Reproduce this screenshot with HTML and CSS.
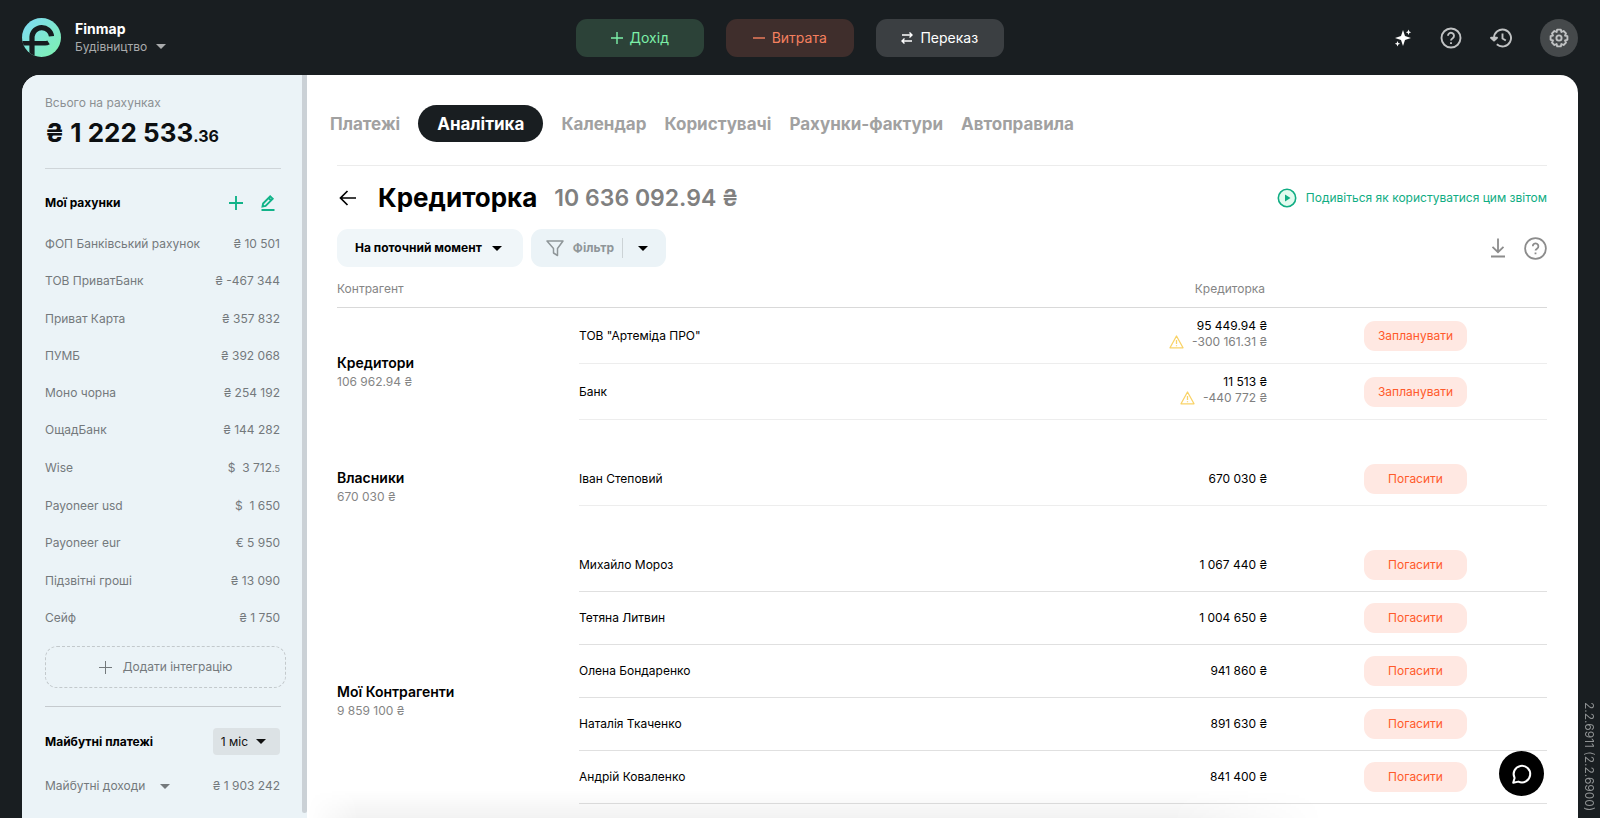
FILE: index.html
```html
<!DOCTYPE html>
<html lang="uk">
<head>
<meta charset="utf-8">
<title>Finmap</title>
<link rel="stylesheet" href="styles.css">
</head>
<body>
<header class="topbar">
  <div class="brand">
    <svg class="logo" viewBox="0 0 39 39" aria-hidden="true">
      <defs>
        <linearGradient id="lg" x1="0" y1="0" x2="1" y2="1"><stop offset="0.1" stop-color="#7fdcf0"/><stop offset="0.9" stop-color="#7df0b4"/></linearGradient>
        <clipPath id="disc"><circle cx="19.500" cy="19.500" r="19.500"/></clipPath>
      </defs>
      <circle cx="19.500" cy="19.500" r="19.500" fill="url(#lg)"/>
      <g clip-path="url(#disc)" fill="none" stroke="#171c1f" stroke-width="5.200">
        <path d="M10 39V18.600a9.800 9.800 0 0 1 19.500-.4"/>
        <path d="M-1 25.300H23a6 6 0 0 0 3.500-1" stroke-width="4.600"/>
      </g>
    </svg>
    <div class="brand-text">
      <strong class="brand-name">Finmap</strong>
      <button class="company" type="button">Будівництво <span class="caret"></span></button>
    </div>
  </div>
  <div class="quick">
    <button class="quick-btn income" type="button"><svg width="12" height="12" viewBox="0 0 12 12"><path d="M6 0v12M0 6h12"/></svg>Дохід</button>
    <button class="quick-btn expense" type="button"><svg width="12" height="12" viewBox="0 0 12 12"><path d="M0 6h12"/></svg>Витрата</button>
    <button class="quick-btn transfer" type="button"><svg width="12" height="12" viewBox="0 0 12 12"><path d="M1 3h10M8.500.5 11 3 8.500 5.500M11 9H1M3.500 6.500 1 9l2.500 2.500"/></svg>Переказ</button>
  </div>
  <div class="tools">
    <button class="tool sparkle" type="button" aria-label="AI"><svg width="18" height="18" viewBox="0 0 18 18"><path d="M9 1 11 7 17 9 11 11 9 17 7 11 1 9 7 7Z"/><path d="M14.500 0.500l.8 1.900 1.900.8-1.900.8-.8 1.900-.8-1.900-1.900-.8 1.900-.8ZM3.500 12l.8 1.900 1.900.8-1.900.8-.8 1.900-.8-1.900-1.900-.8 1.900-.8Z"/></svg></button>
    <button class="tool" type="button" aria-label="Допомога"><svg width="22" height="22" viewBox="0 0 22 22" class="line"><circle cx="11" cy="11" r="9.500"/><path d="M8 8.800a3 3 0 1 1 4.700 2.400c-1 .7-1.700 1.200-1.700 2.300"/><path d="M11 15.200v1.800"/></svg></button>
    <button class="tool" type="button" aria-label="Історія"><svg width="22" height="22" viewBox="0 0 22 22" class="line"><path d="M4 11a8.500 8.500 0 1 1 2.800 6.300M12.500 6.500V11.500l3.300 2"/><path d="M1 10.800h6L4 13.600Z" fill="currentColor"/></svg></button>
    <button class="tool settings" type="button" aria-label="Налаштування"><svg width="20" height="20" viewBox="0 0 20 20" class="line"><path d="M18.400 8.200V11.800L16 12.400 17 14.600 14.600 17 12.400 16 11.800 18.400H8.200L7.600 16 5.400 17 3 14.600 4 12.400 1.600 11.800V8.200L4 7.600 3 5.400 5.400 3 7.600 4 8.200 1.600H11.800L12.400 4 14.600 3 17 5.400 16 7.600Z"/><circle cx="10" cy="10" r="2.600"/></svg></button>
  </div>
</header>

<div class="shell">
  <aside class="sidebar">
    <div class="total">
      <p class="total-label">Всього на рахунках</p>
      <p class="total-sum">₴ 1 222 533<small>.36</small></p>
    </div>
    <div class="side-head">
      <h2>Мої рахунки</h2>
      <button class="icon-btn" type="button" aria-label="Додати рахунок"><svg width="14" height="14" viewBox="0 0 14 14"><path d="M7 0v14M0 7h14"/></svg></button>
      <button class="icon-btn" type="button" aria-label="Редагувати"><svg width="14" height="16" viewBox="0 0 14 16"><path d="M.5 15h13M1.500 11.500l.6-3L9.200 1.400l2.500 2.400-7.100 7.100-3.100.6ZM7.600 3l2.500 2.500"/></svg></button>
    </div>
    <ul class="accounts">
      <li><span>ФОП Банківський рахунок</span><span>₴ 10 501</span></li>
      <li><span>ТОВ ПриватБанк</span><span>₴ -467 344</span></li>
      <li><span>Приват Карта</span><span>₴ 357 832</span></li>
      <li><span>ПУМБ</span><span>₴ 392 068</span></li>
      <li><span>Моно чорна</span><span>₴ 254 192</span></li>
      <li><span>ОщадБанк</span><span>₴ 144 282</span></li>
      <li><span>Wise</span><span>$ &nbsp;3 712<small>.5</small></span></li>
      <li><span>Payoneer usd</span><span>$ &nbsp;1 650</span></li>
      <li><span>Payoneer eur</span><span>€ 5 950</span></li>
      <li><span>Підзвітні гроші</span><span>₴ 13 090</span></li>
      <li><span>Сейф</span><span>₴ 1 750</span></li>
    </ul>
    <button class="integration" type="button"><svg width="13" height="13" viewBox="0 0 13 13"><path d="M6.500 0v13M0 6.500h13"/></svg>Додати інтеграцію</button>
    <div class="future">
      <div class="future-head">
        <h2>Майбутні платежі</h2>
        <button class="period" type="button">1 міс <span class="caret"></span></button>
      </div>
      <div class="future-row">
        <button class="future-toggle" type="button">Майбутні доходи <span class="caret"></span></button>
        <span>₴ 1 903 242</span>
      </div>
    </div>
    <span class="scroll-thumb"></span>
  </aside>

  <main class="main">
    <nav class="tabs">
      <a href="#payments">Платежі</a>
      <a href="#analytics" class="active">Аналітика</a>
      <a href="#calendar">Календар</a>
      <a href="#users">Користувачі</a>
      <a href="#invoices">Рахунки-фактури</a>
      <a href="#rules">Автоправила</a>
    </nav>
    <section class="report">
      <div class="title-row">
        <button class="back" type="button" aria-label="Назад"><svg width="18" height="16" viewBox="0 0 18 16"><path d="M17 8H1.500M8.500 1 1.500 8l7 7"/></svg></button>
        <h1>Кредиторка</h1>
        <span class="sum">10 636 092.94 ₴</span>
        <a class="howto" href="#howto"><svg width="20" height="20" viewBox="0 0 20 20"><circle class="ring" cx="10" cy="10" r="8.700"/><path class="play" d="M8 6.500v7l5.500-3.500Z"/></svg>Подивіться як користуватися цим звітом</a>
      </div>
      <div class="filters">
        <button class="chip moment" type="button">На поточний момент <span class="caret"></span></button>
        <button class="chip filter" type="button"><svg width="18" height="17" viewBox="0 0 18 17"><path d="M1 1h16l-5.500 7.500v7l-4-2.500V8.500Z"/></svg>Фільтр<span class="bar"></span><span class="caret"></span></button>
        <button class="plain download" type="button" aria-label="Завантажити"><svg width="16" height="20" viewBox="0 0 16 20"><path d="M8 .5v13.500M2.500 8.800 8 14.200l5.500-5.400M1 18.500h14"/></svg></button>
        <button class="plain" type="button" aria-label="Довідка"><svg width="23" height="23" viewBox="0 0 23 23"><circle cx="11.500" cy="11.500" r="10.400"/><path d="M8.800 9.300a2.800 2.800 0 1 1 4.300 2.300c-1 .7-1.600 1.100-1.600 2"/><path d="M11.500 15.400v1.800"/></svg></button>
      </div>
      <table class="grid">
        <colgroup><col class="c-group"><col class="c-name"><col class="c-sum"><col class="c-act"></colgroup>
        <thead><tr><th colspan="2" scope="col">Контрагент</th><th class="num" scope="col">Кредиторка</th><th></th></tr></thead>
        <tbody class="tall">
          <tr><th class="group" rowspan="2" scope="rowgroup">Кредитори<small>106 962.94 ₴</small></th><td>ТОВ "Артеміда ПРО"</td><td class="num">95 449.94 ₴<span class="overdue"><svg width="15" height="14" viewBox="0 0 15 14"><path d="M7.500 1 14 12.800H1ZM7.500 5v4M7.500 10.300v1"/></svg>-300 161.31 ₴</span></td><td class="act"><button type="button">Запланувати</button></td></tr>
          <tr><td>Банк</td><td class="num">11 513 ₴<span class="overdue"><svg width="15" height="14" viewBox="0 0 15 14"><path d="M7.500 1 14 12.800H1ZM7.500 5v4M7.500 10.300v1"/></svg>-440 772 ₴</span></td><td class="act"><button type="button">Запланувати</button></td></tr>
          <tr class="space"><td colspan="4"></td></tr>
        </tbody>
        <tbody>
          <tr><th class="group" scope="rowgroup">Власники<small>670 030 ₴</small></th><td>Іван Степовий</td><td class="num">670 030 ₴</td><td class="act"><button type="button">Погасити</button></td></tr>
          <tr class="space"><td colspan="4"></td></tr>
        </tbody>
        <tbody class="people">
          <tr><th class="group" rowspan="6" scope="rowgroup">Мої Контрагенти<small>9 859 100 ₴</small></th><td>Михайло Мороз</td><td class="num">1 067 440 ₴</td><td class="act"><button type="button">Погасити</button></td></tr>
          <tr><td>Тетяна Литвин</td><td class="num">1 004 650 ₴</td><td class="act"><button type="button">Погасити</button></td></tr>
          <tr><td>Олена Бондаренко</td><td class="num">941 860 ₴</td><td class="act"><button type="button">Погасити</button></td></tr>
          <tr><td>Наталія Ткаченко</td><td class="num">891 630 ₴</td><td class="act"><button type="button">Погасити</button></td></tr>
          <tr><td>Андрій Коваленко</td><td class="num">841 400 ₴</td><td class="act"><button type="button">Погасити</button></td></tr>
          <tr class="tail"><td colspan="3"></td></tr>
        </tbody>
      </table>
    </section>
  </main>
</div>
<button class="chat" type="button" aria-label="Чат"><svg width="22" height="22" viewBox="0 0 22 22"><path d="M2.200 19.800 3.600 15A8.300 8.300 0 1 1 7.400 18.600Z"/></svg></button>
<span class="version">2.2.6911 (2.2.6900)</span>
</body>
</html>
```

FILE: styles.css
```css
* { box-sizing: border-box; }
body {
  margin: 0;
  height: 100vh;
  overflow: hidden;
  display: flex;
  flex-direction: column;
  background: #191e21;
  color: #000;
  font: 12px/20px Inter, "Liberation Sans", sans-serif;
}
button { font: inherit; color: inherit; background: none; border: 0; padding: 0; cursor: pointer; }
a { text-decoration: none; }
h1, h2, p, ul { margin: 0; padding: 0; }
svg { display: block; flex: none; fill: none; }
.caret {
  display: inline-block;
  border: 5px solid transparent;
  border-top-color: currentColor;
  border-bottom: 0;
}

.topbar {
  flex: none;
  display: grid;
  grid-template-columns: 27fr auto 28fr;
  align-items: center;
  height: 75px;
  padding: 0 22px;
}
.brand { display: flex; align-items: center; gap: 14px; }
.logo { width: 39px; height: 39px; }
.brand-text { display: flex; flex-direction: column; align-items: flex-start; }
.brand-name { color: #fff; font-size: 14px; line-height: 18px; }
.company { display: flex; align-items: center; gap: 9px; color: #a9abac; line-height: 18px; }
.quick { display: flex; gap: 22px; }
.quick-btn {
  display: flex; align-items: center; justify-content: center; gap: 7px;
  width: 128px; height: 38px; border-radius: 11px;
  font-size: 14px;
}
.quick-btn svg { stroke: currentColor; stroke-width: 1.400; }
.income { background: #2c4238; color: #7cf0a8; }
.expense { background: #3f2e2c; color: #f5805f; }
.transfer { background: #3b3f42; color: #fff; }
.tools { display: flex; justify-content: flex-end; align-items: center; gap: 28px; }
.tool { color: #c0c2c3; }
.sparkle svg { fill: #fff; }
.line { stroke: currentColor; stroke-width: 1.900; stroke-linejoin: round; }
.settings {
  display: grid; place-items: center;
  width: 38px; height: 38px; border-radius: 50%; background: #45494b;
}

.shell {
  flex: 1; min-height: 0;
  display: flex;
  margin: 0 22px;
  border-radius: 18px 18px 0 0;
  overflow: hidden;
  background: #fff;
}
.sidebar {
  position: relative;
  flex: none;
  display: flex; flex-direction: column;
  width: 285px;
  padding: 18px 26px 22px 23px;
  background: #ebf3f7;
  color: #74797c;
}
.scroll-thumb {
  position: absolute; top: 0; right: 0; bottom: 5px;
  width: 5px; border-radius: 0 0 3px 3px;
  background: #cbd1d6;
}
.total { padding-bottom: 17px; border-bottom: 1px solid #cfd5d9; }
.total-label { margin-bottom: 2px; font-size: 12px; color: #8b9093; }
.total-sum { color: #0c0f11; font-size: 26px; font-weight: 700; line-height: 36px; }
.total-sum small { font-size: 16px; line-height: 1; }
h2 { font-size: 12px; line-height: 20px; font-weight: 700; color: #000; }
.side-head { display: flex; align-items: center; gap: 18px; padding: 24px 6px 21px 0; }
.side-head h2 { flex: 1; }
.icon-btn svg { stroke: #12b389; stroke-width: 1.900; }
.accounts {
  flex: 1; min-height: 0;
  display: flex; flex-direction: column; justify-content: space-between;
  list-style: none;
}
.accounts li, .future-row, .future-head {
  display: flex; justify-content: space-between; align-items: center;
  padding-right: 1px;
}
.accounts small { font-size: 9px; }
.integration {
  display: flex; align-items: center; justify-content: center; gap: 11px;
  height: 42px; margin: 18px -5px 18px 0;
  border: 1px dashed #c3c9cc; border-radius: 12px;
}
.integration svg { stroke: currentColor; }
.future { border-top: 1px solid #c5cace; padding-top: 21px; }
.period {
  display: flex; align-items: center; gap: 8px;
  height: 27px; padding: 0 14px 0 8px;
  border-radius: 4px; background: #dce2e5; color: #111;
}
.future-row { padding-top: 21px; }
.future-toggle { display: flex; align-items: center; gap: 15px; }

.main { position: relative; flex: 1; min-width: 0; padding: 30px 31px 0 23px; }
.main::after {
  content: "";
  position: absolute; left: 0; right: 20%; bottom: 0;
  height: 28px;
  background: linear-gradient(rgba(0, 0, 0, 0), rgba(0, 0, 0, .05));
  -webkit-mask-image: linear-gradient(90deg, transparent, #000 5%, #000 85%, transparent);
  mask-image: linear-gradient(90deg, transparent, #000 5%, #000 85%, transparent);
  pointer-events: none;
}
.tabs { display: flex; align-items: center; gap: 18px; height: 37px; font-size: 17px; font-weight: 700; }
.tabs a { color: #a1a1a1; }
.tabs .active { padding: 9px 19px 8px; border-radius: 19px; background: #191e21; color: #fff; }
.report { margin: 23px 0 0 7px; border-top: 1px solid #ececec; }
.title-row { display: flex; align-items: center; height: 63px; }
.back { padding: 0 21px 0 2px; }
.back svg { stroke: #000; stroke-width: 1.700; }
h1 { font-size: 26px; font-weight: 700; line-height: 36px; }
.sum { margin-left: 17px; color: #808080; font-size: 23px; font-weight: 600; }
.howto { display: flex; align-items: center; gap: 9px; margin-left: auto; color: #10ad83; }
.ring { fill: #e2fbef; stroke: #10ad83; stroke-width: 1.600; }
.play { fill: #10ad83; }
.filters { display: flex; align-items: center; gap: 8px; }
.chip { display: flex; align-items: center; height: 38px; border-radius: 11px; background: #f0f6f9; font-weight: 700; }
.moment { gap: 10px; padding: 0 21px 0 18px; }
.filter { background: #ebf3f7; padding: 0 18px 0 15px; color: #8f9699; }
.filter svg { margin-right: 9px; stroke: #8f9699; stroke-width: 1.500; stroke-linejoin: round; }
.filter .bar { width: 1px; height: 20px; margin: 0 15px 0 8px; background: #ccd3d6; }
.filter .caret { color: #000; }
.plain svg { stroke: #8c8c8c; stroke-width: 1.800; }
.download { margin-left: auto; margin-right: 10px; }

.grid { width: 100%; table-layout: fixed; border-collapse: separate; border-spacing: 0; }
.c-group { width: 20%; }
.c-sum { width: 28%; }
.c-act { width: 280px; }
.grid th, .grid td { padding: 0; text-align: left; font-weight: 400; }
.grid thead th { height: 41px; padding-top: 4px; border-bottom: 1px solid #d9d9d9; font-size: 12px; color: #858585; }
.grid tbody td { height: 53px; border-bottom: 1px solid #ededed; font-size: 12px; line-height: 16px; }
.grid .people td { border-color: #e0e0e0; }
.grid .tall td { height: 56px; }
.grid .tall .num { padding-bottom: 3px; }
.grid tbody .space td { height: 33px; border: 0; }
.grid tbody .tail td { height: 43px; border: 0; }
.grid .num { text-align: right; }
.grid thead .num { padding-right: 2px; }
.grid .act { padding-left: 97px; }
.grid .group { padding-top: 15px; font-size: 14px; font-weight: 600; line-height: 20px; }
.group small { display: block; font-size: 12px; font-weight: 400; line-height: 18px; color: #858585; }
.overdue { display: flex; justify-content: flex-end; align-items: center; gap: 8px; color: #808080; }
.overdue svg { stroke: #f9d368; stroke-width: 1.300; stroke-linejoin: round; }
.act button { width: 103px; height: 30px; border-radius: 11px; background: #ffe8e2; color: #ff5a2b; }

.chat {
  position: fixed; right: 56px; bottom: 22px;
  display: grid; place-items: center;
  width: 45px; height: 45px; border-radius: 50%; background: #000;
}
.chat svg { stroke: #fff; stroke-width: 2; stroke-linejoin: round; }
.version {
  position: fixed; right: 1px; bottom: 7px;
  writing-mode: vertical-rl;
  color: #8f9293; font-size: 12px;
}
```
